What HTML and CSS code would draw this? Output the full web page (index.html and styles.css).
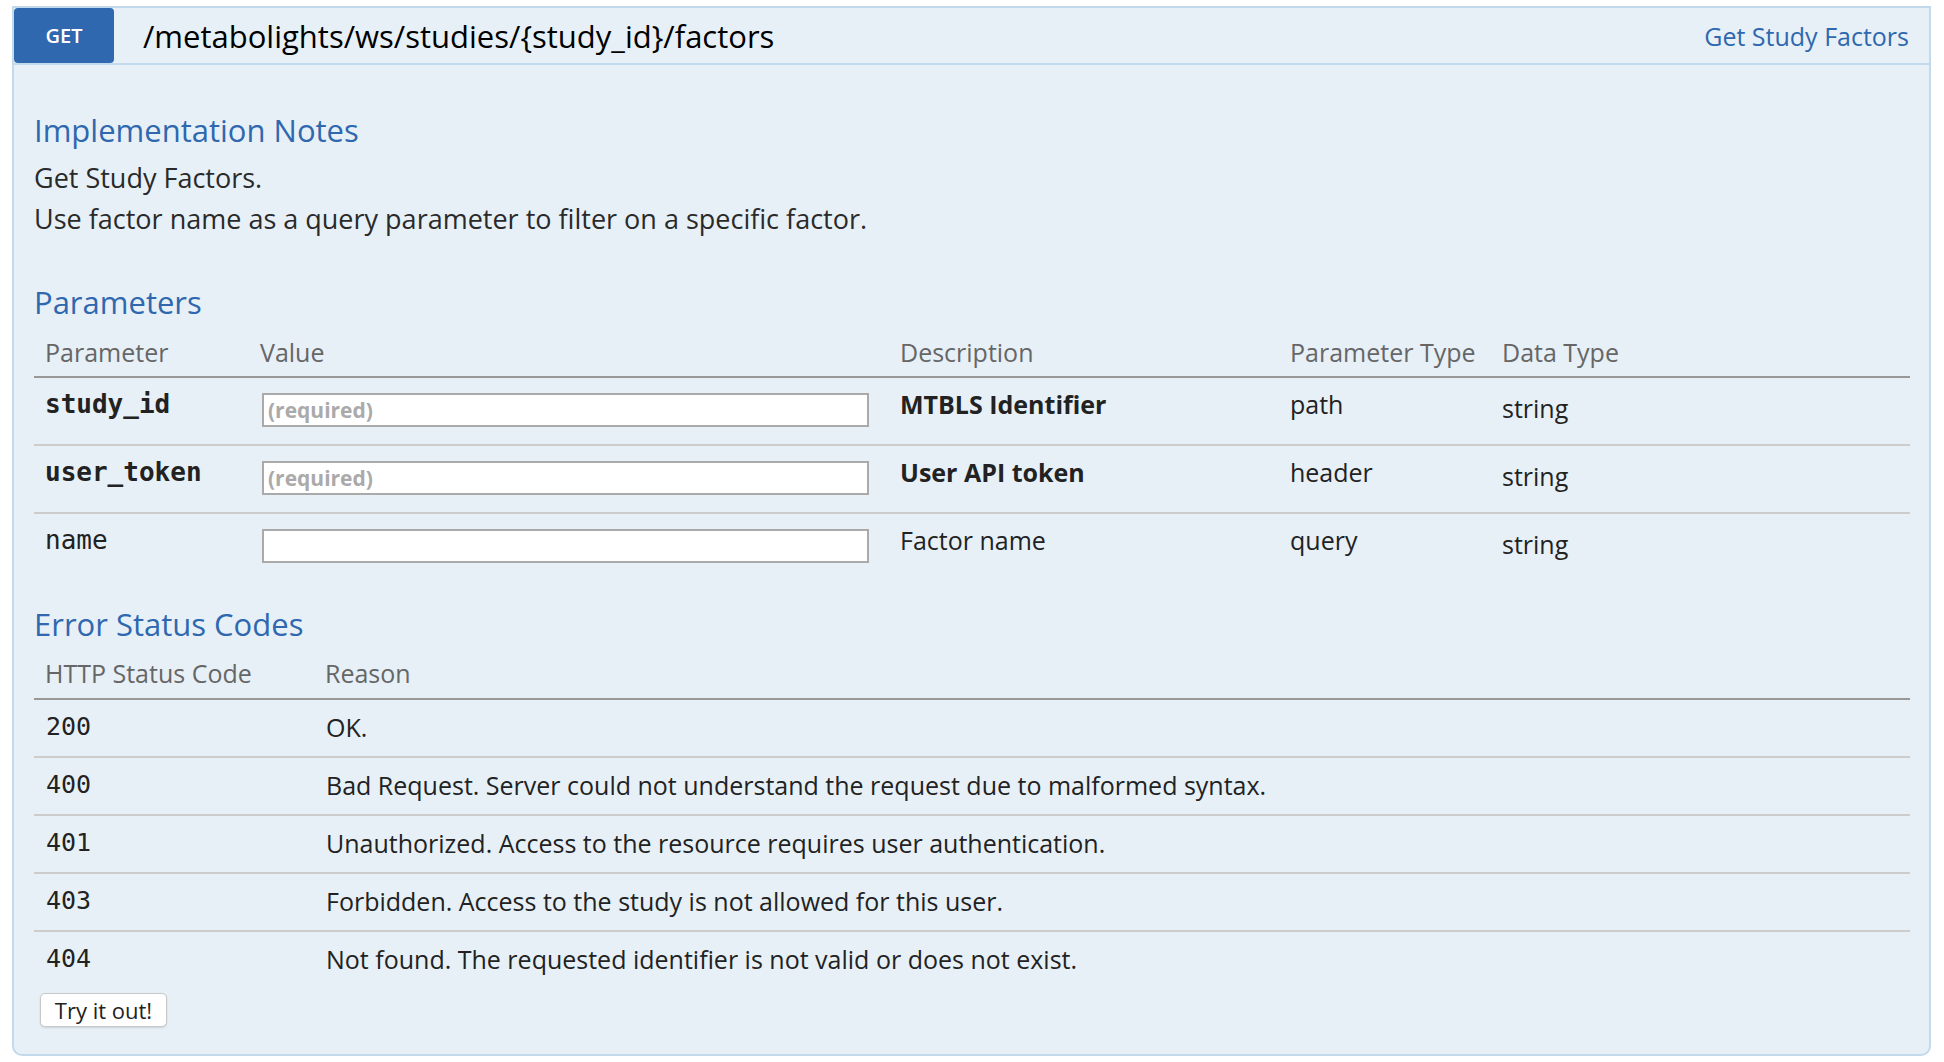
FILE: index.html
```html
<!DOCTYPE html>
<html>
<head>
<meta charset="utf-8">
<link rel="stylesheet" href="styles.css">
</head>
<body>
<div class="op">
  <div class="heading">
    <span class="method">GET</span>
    <span class="path">/metabolights/ws/studies/{study_id}/factors</span>
    <span class="summary">Get Study Factors</span>
  </div>
  <div class="content">
    <h4 class="h-notes">Implementation Notes</h4>
    <div class="notes">
      <div>Get Study Factors.</div>
      <div>Use factor name as a query parameter to filter on a specific factor.</div>
    </div>
    <h4 class="h-params">Parameters</h4>
    <table class="params">
      <thead>
        <tr>
          <th class="c1">Parameter</th>
          <th class="c2">Value</th>
          <th class="c3">Description</th>
          <th class="c4">Parameter Type</th>
          <th class="c5">Data Type</th>
        </tr>
      </thead>
      <tbody>
        <tr>
          <td class="code req">study_id</td>
          <td><input class="field" type="text" placeholder="(required)"></td>
          <td class="desc req">MTBLS Identifier</td>
          <td>path</td>
          <td class="dtype">string</td>
        </tr>
        <tr>
          <td class="code req">user_token</td>
          <td><input class="field" type="text" placeholder="(required)"></td>
          <td class="desc req">User API token</td>
          <td>header</td>
          <td class="dtype">string</td>
        </tr>
        <tr class="last">
          <td class="code">name</td>
          <td><input class="field" type="text"></td>
          <td class="desc">Factor name</td>
          <td>query</td>
          <td class="dtype">string</td>
        </tr>
      </tbody>
    </table>
    <h4 class="h-codes">Error Status Codes</h4>
    <table class="codes">
      <thead>
        <tr>
          <th class="s1">HTTP Status Code</th>
          <th>Reason</th>
        </tr>
      </thead>
      <tbody>
        <tr><td class="code">200</td><td>OK.</td></tr>
        <tr><td class="code">400</td><td>Bad Request. Server could not understand the request due to malformed syntax.</td></tr>
        <tr><td class="code">401</td><td>Unauthorized. Access to the resource requires user authentication.</td></tr>
        <tr><td class="code">403</td><td>Forbidden. Access to the study is not allowed for this user.</td></tr>
        <tr class="last"><td class="code">404</td><td>Not found. The requested identifier is not valid or does not exist.</td></tr>
      </tbody>
    </table>
    <button class="try" type="button">Try it out!</button>
  </div>
</div>
</body>
</html>
```

FILE: styles.css
```css
html, body {
  margin: 0;
  padding: 0;
  background: #ffffff;
}
body {
  padding: 6px 13px 0 12px;
  font-family: "Open Sans", "Noto Sans", sans-serif;
  color: #222;
}
.op {
  width: 100%;
}
.heading {
  display: flex;
  align-items: center;
  background: #e7f0f7;
  border: 2px solid #c3d9ec;
  height: 55px;
  padding: 0 20px 0 0;
}
.method {
  display: flex;
  align-items: center;
  justify-content: center;
  width: 100px;
  height: 55px;
  background: #2f68ae;
  color: #fff;
  border-radius: 4px;
  font-size: 20px;
  font-weight: 600;
}
.path {
  margin-left: 29px;
  font-size: 31px;
  color: #000;
  flex: 1;
  line-height: 40px;
}
.summary {
  font-size: 25px;
  color: #2f68ae;
  line-height: 40px;
}
.content {
  background: #e7f0f7;
  border: 2px solid #c3d9ec;
  border-top: none;
  border-radius: 0 0 10px 10px;
  padding: 45px 19px 27px 20px;
}
h4 {
  margin: 0;
  font-weight: 400;
  font-size: 31px;
  line-height: 40px;
  color: #2f68ae;
}
.notes {
  margin-top: 7px;
  font-size: 27px;
  line-height: 41px;
  color: #2a2a2a;
}
.h-params {
  margin-top: 43px;
}
table {
  width: 100%;
  border-collapse: collapse;
}
th {
  text-align: left;
  font-weight: 400;
  color: #666;
  font-size: 25px;
  line-height: 32px;
  padding: 14px 10px 8px 11px;
  border-bottom: 2px solid #999;
}
.params .c1 { width: 194px; }
.params .c2 { width: 619px; }
.params .c3 { width: 369px; }
.params .c4 { width: 191px; }
.params td {
  vertical-align: top;
  height: 68px;
  box-sizing: border-box;
  padding: 8px 10px 0 11px;
  font-size: 25px;
  line-height: 36px;
  border-bottom: 2px solid #cccccc;
}
.params tr.last td {
  border-bottom: none;
}
td.code {
  font-family: "DejaVu Sans Mono", "Liberation Mono", monospace;
  font-size: 26px;
}
td.req {
  font-weight: 700;
}
td.dtype {
  padding-top: 12px;
}
.field {
  display: block;
  box-sizing: border-box;
  width: 607px;
  height: 34px;
  margin: 7px 0 0 2px;
  border: 2px solid #aaa;
  background: #fff;
  padding: 0 4px;
  font-family: "Open Sans", sans-serif;
  font-size: 21px;
}
.field::placeholder {
  color: #aaa;
  font-weight: 700;
}
.h-codes {
  margin-top: 23px;
}
.codes th {
  padding-top: 13px;
  padding-bottom: 9px;
}
.codes .s1 { width: 259px; }
.codes td {
  vertical-align: top;
  height: 58px;
  box-sizing: border-box;
  padding: 9px 10px 0 12px;
  font-size: 25px;
  line-height: 36px;
  border-bottom: 2px solid #cccccc;
}
.codes tr.last td {
  border-bottom: none;
}
.try {
  display: block;
  margin: 4px 0 0 6px;
  width: 127px;
  height: 34px;
  background: #fff;
  border: 1px solid #c8c8c8;
  border-radius: 5px;
  box-shadow: 0 1px 2px rgba(0,0,0,0.12);
  font-family: "Open Sans", sans-serif;
  font-size: 22px;
  color: #222;
  padding: 0;
}
```
